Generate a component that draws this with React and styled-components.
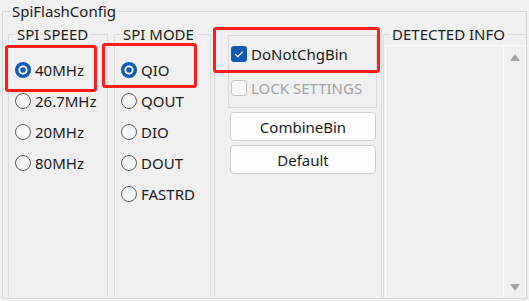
import React from "react";
import styled, { createGlobalStyle } from "styled-components";

const GlobalStyle = createGlobalStyle`
  html, body {
    margin: 0;
    padding: 0;
    background: #f0f0f0;
  }
  body {
    font-family: "Noto Sans", "Liberation Sans", sans-serif;
    font-size: 15px;
    color: #1b1b1b;
  }
`;

const speeds = ["40MHz", "26.7MHz", "20MHz", "80MHz"];
const modes = ["QIO", "QOUT", "DIO", "DOUT", "FASTRD"];

// 주석용 빨간 박스 위치
const marks = [
  { left: 5, top: 45, width: 92, height: 47 },
  { left: 102, top: 43, width: 95, height: 45 },
  { left: 213, top: 27, width: 167, height: 46 },
];

const Radio = ({ checked }) => (
  <svg width="16" height="16" viewBox="0 0 16 16">
    {checked ? (
      <>
        <circle cx="8" cy="8" r="8" fill="#0f5ab4" />
        <circle cx="8" cy="8" r="4.6" fill="#fff" />
        <circle cx="8" cy="8" r="2.8" fill="#0f5ab4" />
      </>
    ) : (
      <circle cx="8" cy="8" r="7.5" fill="#f7f7f7" stroke="#5c5c5c" strokeWidth="1" />
    )}
  </svg>
);

const Check = ({ checked }) => (
  <svg width="16" height="16" viewBox="0 0 16 16">
    {checked ? (
      <>
        <rect x="0" y="0" width="16" height="16" rx="3" fill="#0f5ab4" />
        <path d="M4.3 8.2 L6.9 10.7 L11.8 5.6" fill="none" stroke="#fff" strokeWidth="1.2" />
      </>
    ) : (
      <rect x="0.5" y="0.5" width="15" height="15" rx="3" fill="#f9f9f9" stroke="#c4c4c4" />
    )}
  </svg>
);

const App = () => {
  return (
    <Root>
      <GlobalStyle />
      <Outer>
        <OuterLegend>SpiFlashConfig</OuterLegend>
        <Columns>
          <Group $width={100}>
            <GroupLegend>SPI SPEED</GroupLegend>
            <RadioList>
              {speeds.map((s, i) => (
                <OptionRow key={s}>
                  <Radio checked={i === 0} />
                  <span>{s}</span>
                </OptionRow>
              ))}
            </RadioList>
          </Group>

          <Group $width={97}>
            <GroupLegend>SPI MODE</GroupLegend>
            <RadioList>
              {modes.map((m, i) => (
                <OptionRow key={m}>
                  <Radio checked={i === 0} />
                  <span>{m}</span>
                </OptionRow>
              ))}
            </RadioList>
          </Group>

          <ActionPanel>
            <CheckFrame>
              <OptionRow $tall>
                <Check checked />
                <span>DoNotChgBin</span>
              </OptionRow>
              <OptionRow $tall $disabled>
                <Check />
                <span>LOCK SETTINGS</span>
              </OptionRow>
            </CheckFrame>
            <Button>CombineBin</Button>
            <Button>Default</Button>
          </ActionPanel>

          <InfoGroup>
            <GroupLegend>DETECTED INFO</GroupLegend>
            <ListBox>
              <ListArea />
              <ScrollBar>
                <Arrow $dir="up" />
                <Arrow $dir="down" />
              </ScrollBar>
            </ListBox>
          </InfoGroup>
        </Columns>
      </Outer>

      {marks.map((m, i) => (
        <Mark
          key={i}
          style={{ left: m.left, top: m.top, width: m.width, height: m.height }}
        />
      ))}
    </Root>
  );
};

export default App;

const Root = styled.div`
  position: relative;
  width: 529px;
  height: 301px;
  padding-top: 2px;
  box-sizing: border-box;
  overflow: hidden;
  background: #f0f0f0;
`;

const Outer = styled.fieldset`
  box-sizing: border-box;
  width: 525px;
  height: 297px;
  margin: 0 0 0 2px;
  padding: 5px 0 0 5px;
  border: 1px solid #d7d7d7;
  min-width: 0;
`;

const OuterLegend = styled.legend`
  margin-left: 2px;
  padding: 0 2px;
  font-size: 15px;
  line-height: 18px;
`;

const Columns = styled.div`
  display: flex;
  height: 272px;
  align-items: stretch;
`;

const Group = styled.fieldset`
  box-sizing: border-box;
  width: ${(p) => p.$width}px;
  flex-shrink: 0;
  margin: 0 6px 0 0;
  padding: 0;
  border: 1px solid #dcdcdc;
  border-bottom: none;
  min-width: 0;
`;

const GroupLegend = styled.legend`
  margin-left: 6px;
  padding: 0 2px;
  font-size: 15px;
  line-height: 18px;
`;

const RadioList = styled.div`
  display: flex;
  flex-direction: column;
  padding: 11px 0 0 6px;
`;

const OptionRow = styled.label`
  display: flex;
  align-items: center;
  gap: 4px;
  height: ${(p) => (p.$tall ? 34 : 31)}px;
  font-size: 15px;
  color: ${(p) => (p.$disabled ? "#a2a2a2" : "#1b1b1b")};
  white-space: nowrap;

  svg {
    flex-shrink: 0;
  }
`;

const ActionPanel = styled.div`
  box-sizing: border-box;
  width: 168px;
  flex-shrink: 0;
  margin-top: 5px;
  margin-left: -3px;
  padding: 5px 4px 0 13px;
  border-left: 1px solid #dcdcdc;
  border-right: 1px solid #dcdcdc;
  display: flex;
  flex-direction: column;
  gap: 4px;
`;

const CheckFrame = styled.div`
  box-sizing: border-box;
  width: 149px;
  height: 73px;
  padding: 1px 0 0 2px;
  border: 1px solid #dcdcdc;
  display: flex;
  flex-direction: column;
`;

const Button = styled.button`
  box-sizing: border-box;
  width: 146px;
  height: 29px;
  margin-left: 2px;
  background: #fdfdfd;
  border: 1px solid #d0d0d0;
  border-radius: 4px;
  font-family: "Noto Sans", "Liberation Sans", sans-serif;
  font-size: 15px;
  color: #1b1b1b;
  padding: 0;
  cursor: pointer;
`;

const InfoGroup = styled.fieldset`
  box-sizing: border-box;
  flex: 1;
  margin: 0 0 0 1px;
  padding: 0;
  border: 1px solid #dcdcdc;
  border-right: none;
  border-bottom: none;
  min-width: 0;
  display: flex;
  flex-direction: column;
`;

const ListBox = styled.div`
  flex: 1;
  margin: 2px 0 0 1px;
  display: flex;
  border: 1px solid #fbfbfb;
  border-bottom: none;
  background: #f0f0f0;
`;

const ListArea = styled.div`
  flex: 1;
`;

const ScrollBar = styled.div`
  width: 21px;
  border-left: 1px solid #fbfbfb;
  display: flex;
  flex-direction: column;
  justify-content: space-between;
  align-items: center;
  padding: 8px 0 6px;
`;

const Arrow = styled.div`
  width: 0;
  height: 0;
  border-left: 5px solid transparent;
  border-right: 5px solid transparent;
  ${(p) =>
    p.$dir === "up"
      ? "border-bottom: 7px solid #a3a3a3;"
      : "border-top: 7px solid #a3a3a3;"}
`;

const Mark = styled.div`
  position: absolute;
  box-sizing: border-box;
  border: 3px solid #ff1c1c;
  border-radius: 3px;
  pointer-events: none;
`;
